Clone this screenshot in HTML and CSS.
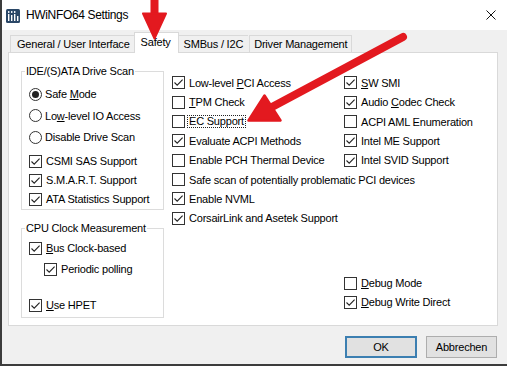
FILE: index.html
```html
<!DOCTYPE html>
<html>
<head>
<meta charset="utf-8">
<title>HWiNFO64 Settings</title>
<link rel="stylesheet" href="styles.css">
</head>
<body>
<div class="win">
  <div class="titlebar">
    <svg class="appicon" width="14" height="14" viewBox="0 0 14 14">
      <rect x="0" y="0" width="14" height="14" rx="1.5" fill="#2a4767"/>
      <rect x="2" y="2" width="1.4" height="2" fill="#e8eef5"/>
      <rect x="5" y="2" width="1.4" height="2" fill="#e8eef5"/>
      <rect x="8" y="2" width="1.4" height="2" fill="#e8eef5"/>
      <rect x="2" y="5" width="1.4" height="7" fill="#ffffff"/>
      <rect x="5" y="6" width="1.4" height="6" fill="#ffffff"/>
      <rect x="8" y="5" width="1.4" height="7" fill="#ffffff"/>
      <rect x="11" y="7" width="1.4" height="5" fill="#ffffff"/>
    </svg>
    <span class="title">HWiNFO64 Settings</span>
    <svg class="close" width="10" height="10" viewBox="0 0 10 10">
      <path d="M0.5 0.5 L9.5 9.5 M9.5 0.5 L0.5 9.5" stroke="#111" stroke-width="1" fill="none"/>
    </svg>
  </div>

  <div class="client">
    <div class="tabs">
      <div class="tab">General / User Interface</div>
      <div class="tab sel">Safety</div>
      <div class="tab smb">SMBus / I2C</div>
      <div class="tab drv">Driver Management</div>
    </div>

    <div class="panel">
      <div class="colL">
        <fieldset class="grp g1">
          <legend>IDE/(S)ATA Drive Scan</legend>
          <div class="radios">
            <div class="opt ro"><span class="rb on"></span><span>Safe <u>M</u>ode</span></div>
            <div class="opt ro"><span class="rb"></span><span>Lo<u>w</u>-level IO Access</span></div>
            <div class="opt ro"><span class="rb"></span><span>Disable Drive Scan</span></div>
          </div>
          <div class="checks">
            <div class="opt"><span class="cb"><svg viewBox="0 0 11 11"><path d="M1.5 5.5 L4.2 8.2 L9.6 2.6"/></svg></span><span>CSMI SAS Support</span></div>
            <div class="opt"><span class="cb"><svg viewBox="0 0 11 11"><path d="M1.5 5.5 L4.2 8.2 L9.6 2.6"/></svg></span><span>S.M.A.R.T. Support</span></div>
            <div class="opt"><span class="cb"><svg viewBox="0 0 11 11"><path d="M1.5 5.5 L4.2 8.2 L9.6 2.6"/></svg></span><span>ATA Statistics Support</span></div>
          </div>
        </fieldset>

        <fieldset class="grp g2">
          <legend>CPU Clock Measurement</legend>
          <div class="opt bus"><span class="cb"><svg viewBox="0 0 11 11"><path d="M1.5 5.5 L4.2 8.2 L9.6 2.6"/></svg></span><span><u>B</u>us Clock-based</span></div>
          <div class="opt sub"><span class="cb"><svg viewBox="0 0 11 11"><path d="M1.5 5.5 L4.2 8.2 L9.6 2.6"/></svg></span><span>Periodic polling</span></div>
          <div class="opt hpet"><span class="cb"><svg viewBox="0 0 11 11"><path d="M1.5 5.5 L4.2 8.2 L9.6 2.6"/></svg></span><span><u>U</u>se HPET</span></div>
        </fieldset>
      </div>

      <div class="colR">
        <div class="grid">
          <div class="opt"><span class="cb"><svg viewBox="0 0 11 11"><path d="M1.5 5.5 L4.2 8.2 L9.6 2.6"/></svg></span><span>Low-level <u>P</u>CI Access</span></div>
          <div class="opt"><span class="cb"><svg viewBox="0 0 11 11"><path d="M1.5 5.5 L4.2 8.2 L9.6 2.6"/></svg></span><span><u>S</u>W SMI</span></div>
          <div class="opt"><span class="cb"></span><span><u>T</u>PM Check</span></div>
          <div class="opt"><span class="cb"><svg viewBox="0 0 11 11"><path d="M1.5 5.5 L4.2 8.2 L9.6 2.6"/></svg></span><span>Audio <u>C</u>odec Check</span></div>
          <div class="opt"><span class="cb"></span><span class="focus">EC Support</span></div>
          <div class="opt"><span class="cb"></span><span>ACPI AML Enumeration</span></div>
          <div class="opt"><span class="cb"><svg viewBox="0 0 11 11"><path d="M1.5 5.5 L4.2 8.2 L9.6 2.6"/></svg></span><span>Evaluate ACPI Methods</span></div>
          <div class="opt"><span class="cb"><svg viewBox="0 0 11 11"><path d="M1.5 5.5 L4.2 8.2 L9.6 2.6"/></svg></span><span>Intel ME Support</span></div>
          <div class="opt"><span class="cb"></span><span>Enable PCH Thermal Device</span></div>
          <div class="opt"><span class="cb"><svg viewBox="0 0 11 11"><path d="M1.5 5.5 L4.2 8.2 L9.6 2.6"/></svg></span><span>Intel SVID Support</span></div>
          <div class="opt wide"><span class="cb"></span><span>Safe scan of potentially problematic PCI devices</span></div>
          <div class="opt"><span class="cb"><svg viewBox="0 0 11 11"><path d="M1.5 5.5 L4.2 8.2 L9.6 2.6"/></svg></span><span>Enable NVML</span></div>
          <div class="opt empty"></div>
          <div class="opt"><span class="cb"><svg viewBox="0 0 11 11"><path d="M1.5 5.5 L4.2 8.2 L9.6 2.6"/></svg></span><span>CorsairLink and Asetek Support</span></div>
        </div>
        <div class="debug">
          <div class="opt"><span class="cb"></span><span><u>D</u>ebug Mode</span></div>
          <div class="opt"><span class="cb"><svg viewBox="0 0 11 11"><path d="M1.5 5.5 L4.2 8.2 L9.6 2.6"/></svg></span><span><u>D</u>ebug Write Direct</span></div>
        </div>
      </div>
    </div>

    <div class="buttons">
      <button class="btn def">OK</button>
      <button class="btn">Abbrechen</button>
    </div>
  </div>

  <svg class="arrows" width="507" height="366" viewBox="0 0 507 366">
    <g fill="#e3191f" stroke="#e3191f" stroke-linejoin="round" stroke-linecap="round">
      <rect x="150.5" y="-2" width="8" height="17" stroke="none"/>
      <polygon points="143,13.5 166,13.5 154.5,38.5" stroke-width="2"/>
      <line x1="403" y1="37" x2="272" y2="107" stroke-width="8" fill="none"/>
      <polygon points="248.5,120.5 264.5,95.5 280.5,120.5" stroke-width="2.5"/>
    </g>
  </svg>
</div>
</body>
</html>
```

FILE: styles.css
```css
html, body {
  margin: 0;
  padding: 0;
  background: #f0f0f0;
}

body {
  font-family: "Liberation Sans", Arial, sans-serif;
  font-size: 11px;
  letter-spacing: -0.2px;
  color: #000;
}

.win {
  position: relative;
  width: 507px;
  height: 366px;
  box-sizing: border-box;
  border-left: 2px solid #3c3c3c;
  border-bottom: 2px solid #3c3c3c;
  background: #f0f0f0;
  overflow: hidden;
  display: flex;
  flex-direction: column;
}

/* title bar */
.titlebar {
  height: 30px;
  flex: none;
  background: #fff;
  display: flex;
  align-items: center;
  padding-left: 4px;
}

.appicon {
  flex: none;
  margin-top: 1px;
}

.title {
  margin-left: 6px;
  font-size: 12px;
  letter-spacing: -0.35px;
  color: #000;
}

.close {
  margin-left: auto;
  margin-right: 11px;
}

/* tabs */
.client {
  flex: 1;
  display: flex;
  flex-direction: column;
}

.tabs {
  height: 22px;
  flex: none;
  display: flex;
  align-items: flex-end;
  padding-left: 8px;
  position: relative;
  z-index: 2;
}

.tab {
  height: 17px;
  box-sizing: border-box;
  border: 1px solid #d9d9d9;
  border-bottom: none;
  border-right: none;
  background: #f0f0f0;
  padding: 0 6px;
  line-height: 16px;
  white-space: nowrap;
}

.tab.sel {
  height: 21px;
  margin: 0 -2px -1px -2px;
  padding: 0 7px 0 6px;
  line-height: 19px;
  background: #fff;
  border-right: 1px solid #d9d9d9;
  position: relative;
  z-index: 3;
}

.tab.smb {
  border-left: none;
  padding: 0 5px 0 7px;
}

.tab.drv {
  padding: 0 4px;
  margin-left: 1px;
  border-right: 1px solid #d9d9d9;
}

/* panel */
.panel {
  margin-left: 6px;
  width: 490px;
  box-sizing: border-box;
  border: 1px solid #d9d9d9;
  background: #fff;
  display: flex;
  padding: 11px 0 7px 12px;
  position: relative;
  z-index: 1;
}

.colL {
  width: 143px;
  flex: none;
  display: flex;
  flex-direction: column;
}

.grp {
  margin: 0;
  width: 143px;
  box-sizing: border-box;
  border: 1px solid #dcdcdc;
  padding: 0 0 0 3px;
  min-inline-size: 0;
}

.grp legend {
  padding: 0 1px;
  line-height: 14px;
  height: 14px;
}

.g1 {
  padding-bottom: 0.5px;
}

.g2 {
  margin-top: 11px;
  padding-bottom: 2.5px;
}

.opt {
  display: flex;
  align-items: center;
  height: 19px;
  line-height: 14px;
  white-space: nowrap;
}

.grp .opt {
  margin-left: 4px;
}

.radios {
  padding-top: 5.25px;
}

.opt.ro {
  height: 21.5px;
}

.checks {
  margin-top: 3.75px;
}

.opt.bus {
  margin-top: 3.5px;
}

.opt.sub {
  margin-top: 2px;
  margin-left: 19px;
}

.opt.hpet {
  margin-top: 17px;
}

/* boxes */
.cb {
  width: 13px;
  height: 13px;
  box-sizing: border-box;
  border: 1px solid #333;
  background: #fff;
  flex: none;
  margin-right: 4px;
  display: flex;
}

.cb svg {
  width: 11px;
  height: 11px;
}

.cb svg path {
  fill: none;
  stroke: #222;
  stroke-width: 1.1;
}

.rb {
  width: 13px;
  height: 13px;
  box-sizing: border-box;
  border: 1px solid #333;
  border-radius: 50%;
  background: #fff;
  flex: none;
  margin-right: 3px;
  display: flex;
  align-items: center;
  justify-content: center;
}

.rb.on::after {
  content: "";
  width: 7px;
  height: 7px;
  border-radius: 50%;
  background: #222;
}

u {
  text-underline-offset: 1px;
}

.focus {
  outline: 1px dotted #222;
  outline-offset: 0;
  padding: 0 1px;
  margin-left: -1px;
  line-height: 11px;
}

/* right area */
.colR {
  margin-left: 8px;
  flex: 1;
  display: flex;
  flex-direction: column;
}

.grid {
  margin-top: 9.33px;
  display: grid;
  grid-template-columns: 172px 1fr;
  grid-auto-rows: 19.33px;
}

.grid .opt {
  height: auto;
}

.opt.wide {
  grid-column: 1 / span 2;
}

.debug {
  margin-top: auto;
  margin-left: 172px;
  margin-bottom: 6.5px;
}

/* buttons */
.buttons {
  display: flex;
  justify-content: flex-end;
  gap: 9px;
  margin-top: 10px;
  padding-right: 10px;
}

.btn {
  height: 22px;
  width: 71px;
  box-sizing: border-box;
  background: #e1e1e1;
  border: 1px solid #adadad;
  font-family: inherit;
  font-size: 11px;
  letter-spacing: -0.2px;
  color: #000;
  padding: 0;
  margin: 0;
}

.btn.def {
  border: 2px solid #3c7fb1;
  width: 72px;
}

/* annotation overlay */
.arrows {
  position: absolute;
  left: -2px;
  top: 0;
  z-index: 10;
  pointer-events: none;
}
```
